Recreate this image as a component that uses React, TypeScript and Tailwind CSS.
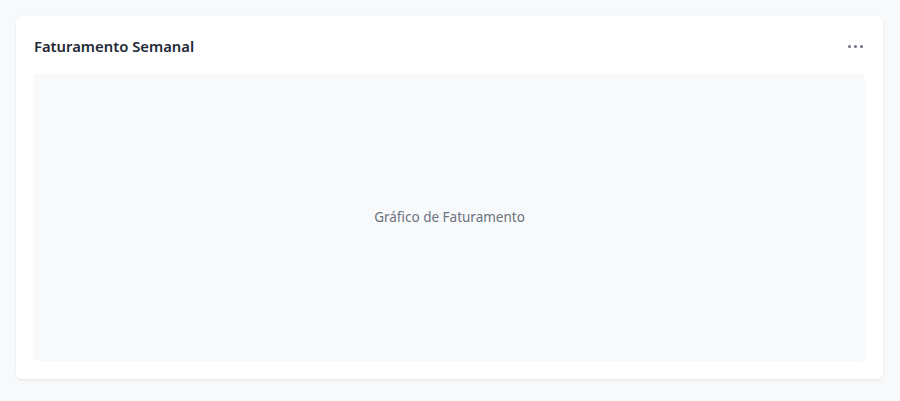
export default function App() {
  return (
    <div className="min-h-[401px] bg-[#f8f9fa] p-4 font-['Noto_Sans',sans-serif]">
      <div className="mr-[1px] rounded-md bg-white p-[18px] shadow-[0_1px_3px_rgba(0,0,0,0.08)]">
        <div className="mb-4 flex h-6 items-center justify-between">
          <h2 className="text-[14.8px] font-semibold text-[#1f2937]">Faturamento Semanal</h2>
          <button className="flex items-center gap-[3px] px-[2px] text-[#6b7280]">
            <span className="h-[3px] w-[3px] rounded-full bg-current" />
            <span className="h-[3px] w-[3px] rounded-full bg-current" />
            <span className="h-[3px] w-[3px] rounded-full bg-current" />
          </button>
        </div>
        <div className="flex h-[287px] items-center justify-center rounded bg-[#f8f9fa]">
          <span className="text-[13.5px] text-[#6b7280]">Gráfico de Faturamento</span>
        </div>
      </div>
    </div>
  )
}
